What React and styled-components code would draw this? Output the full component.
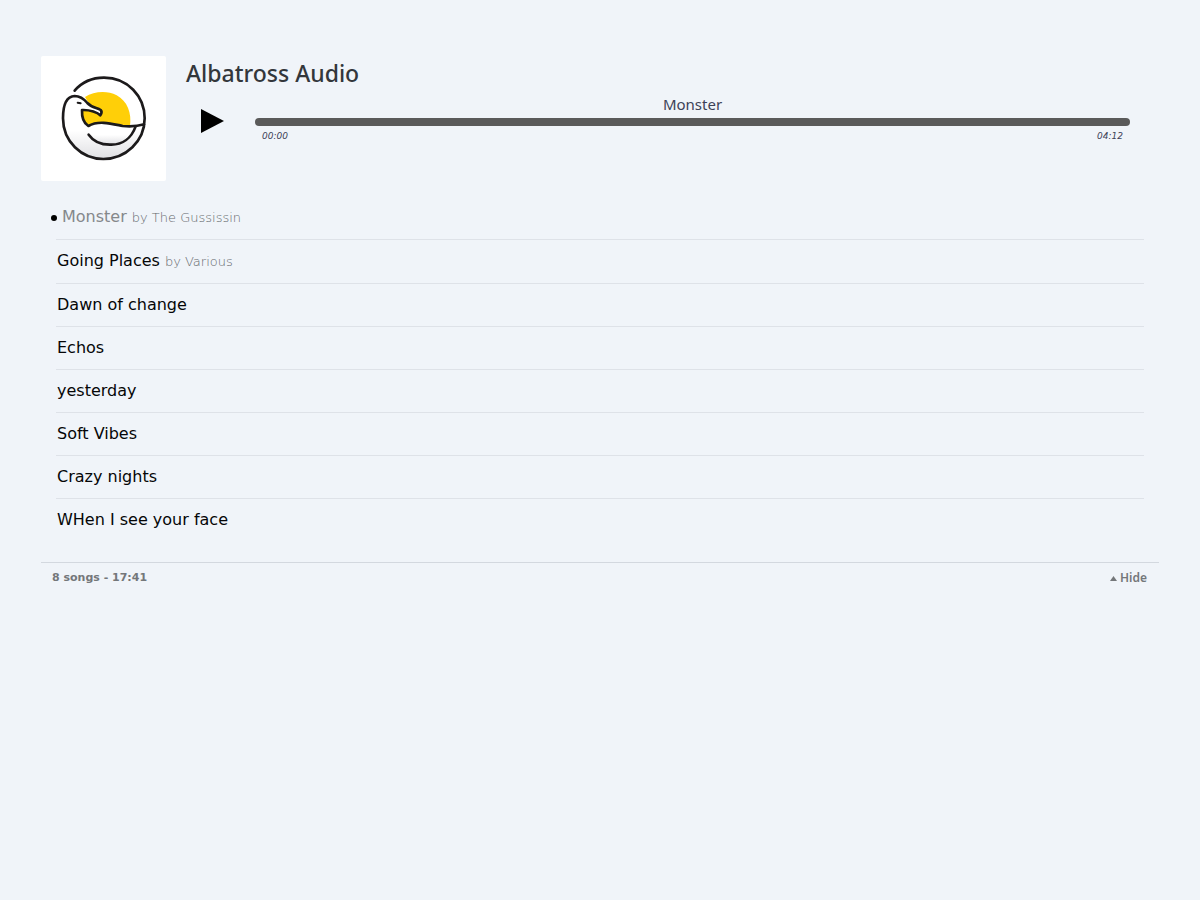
import React, { useState } from 'react';
import styled, { createGlobalStyle } from 'styled-components';

const GlobalStyle = createGlobalStyle`
  body {
    margin: 0;
    background-color: #f0f4f9;
    font-family: Verdana, 'DejaVu Sans', sans-serif;
  }
`;

const Wrapper = styled.main`
  padding: 56px 41px;
`;

const Header = styled.header`
  display: flex;
  gap: 20px;
`;

const Cover = styled.svg`
  flex: none;
  width: 125px;
  height: 125px;
  border-radius: 2px;
  background-color: #fff;
`;

const Player = styled.div`
  flex: 1;
  padding-right: 29px;
`;

const Title = styled.h1`
  margin: 0;
  color: #33373b;
  font-family: 'Noto Sans', sans-serif;
  font-size: 23px;
  font-weight: 500;
  line-height: 34px;
`;

const Controls = styled.div`
  display: flex;
  align-items: flex-start;
  gap: 31px;
  padding: 2px 0 0 15px;
`;

const PlayButton = styled.button`
  display: flex;
  margin: 17px 0 0;
  padding: 0;
  border: 0;
  background: none;
  cursor: pointer;
`;

const Track = styled.div`
  flex: 1;
`;

const TrackName = styled.label`
  display: block;
  padding-bottom: 2px;
  color: #3d4257;
  font-family: 'Noto Sans', sans-serif;
  font-size: 15px;
  line-height: 24px;
  text-align: center;
`;

const Seek = styled.input`
  display: block;
  width: 100%;
  height: 8px;
  margin: 0;
  border-radius: 4px;
  background-color: #5a5a5a;
  appearance: none;
  cursor: pointer;

  &::-webkit-slider-thumb {
    width: 8px;
    height: 8px;
    appearance: none;
  }
`;

const Times = styled.div`
  display: flex;
  justify-content: space-between;
  padding: 3px 7px 0;
  color: #3d4257;
  font-size: 9px;
  font-style: italic;
  line-height: 14px;
`;

const List = styled.ul`
  list-style-type: none;
  margin: 15px 15px 0;
  padding: 0 0 21px;
`;

const ListItem = styled.li`
  border-bottom: 1px solid #dee2e8;

  &:last-child {
    border-bottom: 0;
  }
`;

const Song = styled.button`
  display: flex;
  align-items: baseline;
  gap: 5px;
  width: 100%;
  margin-left: ${props => (props.$active ? '-6px' : '0')};
  padding: 11px 1px;
  border: 0;
  background: none;
  color: ${props => (props.$active ? '#85888b' : '#050607')};
  font-family: inherit;
  font-size: 16px;
  line-height: 20px;
  text-align: left;
  cursor: pointer;
`;

const Dot = styled.span`
  align-self: center;
  width: 6px;
  height: 6px;
  border-radius: 50%;
  background-color: #000;
`;

const Artist = styled.span`
  color: #64686c;
  font-size: 13px;
  font-weight: 200;
`;

const Footer = styled.footer`
  display: flex;
  justify-content: space-between;
  padding: 5px 12px 0 11px;
  border-top: 1px solid #d3d8df;
  color: #74777a;
  font-size: 11px;
  font-weight: bold;
  line-height: 20px;
`;

const Toggle = styled.button`
  display: flex;
  align-items: center;
  gap: 3px;
  padding: 0;
  border: 0;
  background: none;
  color: inherit;
  font-family: 'Noto Sans', sans-serif;
  font-size: 12px;
  font-weight: 600;
  line-height: 18px;
  cursor: pointer;
`;

const songs = [
  { title: 'Monster', artist: 'The Gussissin' },
  { title: 'Going Places', artist: 'Various' },
  { title: 'Dawn of change' },
  { title: 'Echos' },
  { title: 'yesterday' },
  { title: 'Soft Vibes' },
  { title: 'Crazy nights' },
  { title: 'WHen I see your face' },
];

const Logo = () => (
  <Cover viewBox="33 33 375 375" role="img" aria-label="Albatross Audio logo">
    <defs>
      <linearGradient id="shade" x1="0" y1="0" x2="0" y2="1">
        <stop offset="0.55" stopColor="#fff" />
        <stop offset="1" stopColor="#e0e0e3" />
      </linearGradient>
    </defs>
    <path
      d="M100 222C98 187 108 155 134 153C147 153 155 160 164 170L156 194C155 218 160 234 174 244C207 224 254 238 280 243C305 247 326 242 340 239C335 297 284 341 220 341C155 341 104 289 100 222Z"
      fill="url(#shade)"
    />
    <path
      d="M175 244C206 224 253 238 280 243C298 245 308 245 318 243C304 281 274 299 244 299C214 299 191 287 176 269Z"
      fill="url(#shade)"
    />
    <path
      d="M165 156C192 139 231 136 260 151C292 168 306 205 300 244C260 242 216 223 174 243C160 229 155 213 157 195C176 192 195 199 211 210C219 195 200 187 188 184C178 179 172 168 165 156Z"
      fill="#ffcf08"
    />
    <g fill="none" stroke="#1c1a1b" strokeWidth="8" strokeLinecap="round" strokeLinejoin="round">
      <path d="M134 137C158 109 190 98 222 98C293 98 344 154 344 220C344 289 287 342 220 342C154 342 99 289 99 220C99 177 112 154 134 153C151 153 162 162 172 174C185 188 201 188 212 195C216 199 215 205 211 211C203 202 181 194 156 195C155 218 161 234 175 243C207 224 252 238 278 243C304 246 326 243 343 238" />
      <path d="M176 269C190 289 213 300 244 299C277 299 304 280 317 244" />
      <path d="M143 173L152 175" strokeWidth="6" />
    </g>
  </Cover>
);

const App = () => {
  const [current, setCurrent] = useState(0);
  const [open, setOpen] = useState(true);

  return (
    <Wrapper>
      <GlobalStyle />
      <Header>
        <Logo />
        <Player>
          <Title>Albatross Audio</Title>
          <Controls>
            <PlayButton type="button" aria-label="Play">
              <svg width="23" height="24" viewBox="0 0 23 24">
                <path d="M0 0L23 12L0 24Z" />
              </svg>
            </PlayButton>
            <Track>
              <TrackName htmlFor="seek">{songs[current].title}</TrackName>
              <Seek id="seek" type="range" min="0" max="252" defaultValue="0" />
              <Times>
                <span>00:00</span>
                <span>04:12</span>
              </Times>
            </Track>
          </Controls>
        </Player>
      </Header>
      {open && (
        <List>
          {songs.map((song, index) => (
            <ListItem key={song.title}>
              <Song type="button" $active={index === current} onClick={() => setCurrent(index)}>
                {index === current && <Dot />}
                {song.title}
                {song.artist && <Artist>by {song.artist}</Artist>}
              </Song>
            </ListItem>
          ))}
        </List>
      )}
      <Footer>
        <span>8 songs - 17:41</span>
        <Toggle type="button" onClick={() => setOpen(!open)}>
          <svg width="7" height="5" viewBox="0 0 7 5" fill="currentColor">
            <path d={open ? 'M0 5L3.5 0L7 5Z' : 'M0 0L3.5 5L7 0Z'} />
          </svg>
          {open ? 'Hide' : 'Show'}
        </Toggle>
      </Footer>
    </Wrapper>
  );
};

export default App;
